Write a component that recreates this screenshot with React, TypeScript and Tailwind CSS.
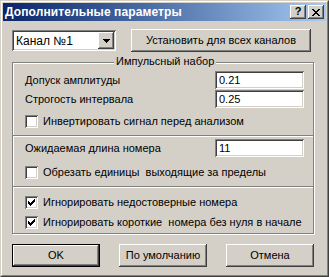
const raised =
  'bg-[#d4d0c8] shadow-[inset_-1px_-1px_#404040,inset_1px_1px_#ffffff,inset_-2px_-2px_#808080,inset_2px_2px_#d4d0c8]'
const sunken =
  'bg-white shadow-[inset_1px_1px_#808080,inset_-1px_-1px_#ffffff,inset_2px_2px_#404040,inset_-2px_-2px_#d4d0c8]'

function Check({ checked }: { checked?: boolean }) {
  return (
    <div className={`flex h-[13px] w-[13px] shrink-0 items-center justify-center ${sunken}`}>
      {checked && (
        <svg width="7" height="7" viewBox="0 0 7 7" shapeRendering="crispEdges">
          <path d="M0 2h1v3h-1zM1 3h1v3h-1zM2 4h1v3h-1zM3 3h1v3h-1zM4 2h1v3h-1zM5 1h1v3h-1zM6 0h1v3h-1z" fill="#000" />
        </svg>
      )}
    </div>
  )
}

function CheckRow({ label, checked, className = '' }: { label: string; checked?: boolean; className?: string }) {
  return (
    <div className={`flex h-[13px] items-center gap-[5px] ${className}`}>
      <Check checked={checked} />
      <span className="whitespace-pre">{label}</span>
    </div>
  )
}

function Edit({ value }: { value: string }) {
  return (
    <div className={`flex h-[18px] w-[89px] items-center pl-[4px] ${sunken}`}>{value}</div>
  )
}

function Separator({ className = '' }: { className?: string }) {
  return <div className={`h-[2px] border-t border-t-[#808080] border-b border-b-white ${className}`} />
}

export default function App() {
  return (
    <div
      className="h-[277px] w-[329px] overflow-hidden border border-t-[#d4d0c8] border-l-[#d4d0c8] border-b-[#404040] border-r-[#404040] bg-[#d4d0c8] text-[11px] leading-none text-black"
      style={{ fontFamily: '"Liberation Sans", Arial, sans-serif' }}
    >
      <div className="h-full border border-t-white border-l-white border-b-[#808080] border-r-[#808080] p-px">
        {/* title bar */}
        <div className="flex h-[18px] items-center bg-gradient-to-r from-[#0a246a] to-[#a6caf0] pl-[2px] pr-[2px]">
          <span className="text-[12px] font-bold tracking-[0.1px] text-white">Дополнительные параметры</span>
          <div className="ml-auto flex gap-[2px]">
            <div className={`flex h-[14px] w-[16px] items-center justify-center text-[11px] font-bold ${raised}`}>
              <span className="-mt-px">?</span>
            </div>
            <div className={`flex h-[14px] w-[16px] items-center justify-center ${raised}`}>
              <svg width="8" height="7" viewBox="0 0 8 7" shapeRendering="crispEdges">
                <path d="M0 0h2v1h-2zM6 0h2v1h-2zM1 1h2v1h-2zM5 1h2v1h-2zM2 2h4v1h-4zM3 3h2v1h-2zM2 4h4v1h-4zM1 5h2v1h-2zM5 5h2v1h-2zM0 6h2v1h-2zM6 6h2v1h-2z" fill="#000" />
              </svg>
            </div>
          </div>
        </div>

        <div className="px-[9px]">
          {/* channel row */}
          <div className="mt-[8px] flex items-center justify-between">
            <div className={`flex h-[21px] w-[104px] items-center pl-[4px] pr-[2px] text-[12px] ${sunken}`}>
              <span>Канал №1</span>
              <div className={`ml-auto flex h-[17px] w-[16px] items-center justify-center ${raised}`}>
                <svg width="7" height="4" viewBox="0 0 7 4" shapeRendering="crispEdges">
                  <path d="M0 0h7v1h-7zM1 1h5v1h-5zM2 2h3v1h-3zM3 3h1v1h-1z" fill="#000" />
                </svg>
              </div>
            </div>
            <div className={`mr-[6px] flex h-[23px] w-[180px] items-center justify-center ${raised}`}>
              Установить для всех каналов
            </div>
          </div>

          {/* group */}
          <div className="relative mt-[10px] w-[302px] border border-[#808080] px-[12px] pt-[8px] pb-[4px] shadow-[inset_1px_1px_#ffffff,1px_1px_#ffffff]">
            <span className="absolute -top-[7px] left-[101px] bg-[#d4d0c8] px-[2px]">Импульсный набор</span>

            <div className="flex h-[18px] items-center justify-between">
              <span>Допуск амплитуды</span>
              <div className="-mr-[3px]"><Edit value="0.21" /></div>
            </div>
            <div className="mt-[1px] flex h-[18px] items-center justify-between">
              <span>Строгость интервала</span>
              <div className="-mr-[3px]"><Edit value="0.25" /></div>
            </div>
            <CheckRow className="mt-[7px]" label="Инвертировать сигнал перед анализом" />
            <Separator className="-mx-[12px] mt-[7px]" />

            <div className="mt-[2px] flex h-[18px] items-center justify-between">
              <span>Ожидаемая длина номера</span>
              <div className="-mr-[3px]"><Edit value="11" /></div>
            </div>
            <CheckRow className="mt-[9px]" label="Обрезать единицы  выходящие за пределы" />
            <Separator className="-mx-[12px] mt-[7px]" />

            <CheckRow className="mt-[8px]" checked label="Игнорировать недостоверные номера" />
            <CheckRow className="mt-[7px]" checked label="Игнорировать короткие  номера без нуля в начале" />
          </div>

          {/* buttons */}
          <div className="mt-[10px] flex w-[302px] justify-between">
            <div className="border border-black">
              <div className={`flex h-[21px] w-[86px] items-center justify-center ${raised}`}>OK</div>
            </div>
            <div className={`flex h-[23px] w-[88px] items-center justify-center ${raised}`}>По умолчанию</div>
            <div className={`flex h-[23px] w-[88px] items-center justify-center ${raised}`}>Отмена</div>
          </div>
        </div>
      </div>
    </div>
  )
}
